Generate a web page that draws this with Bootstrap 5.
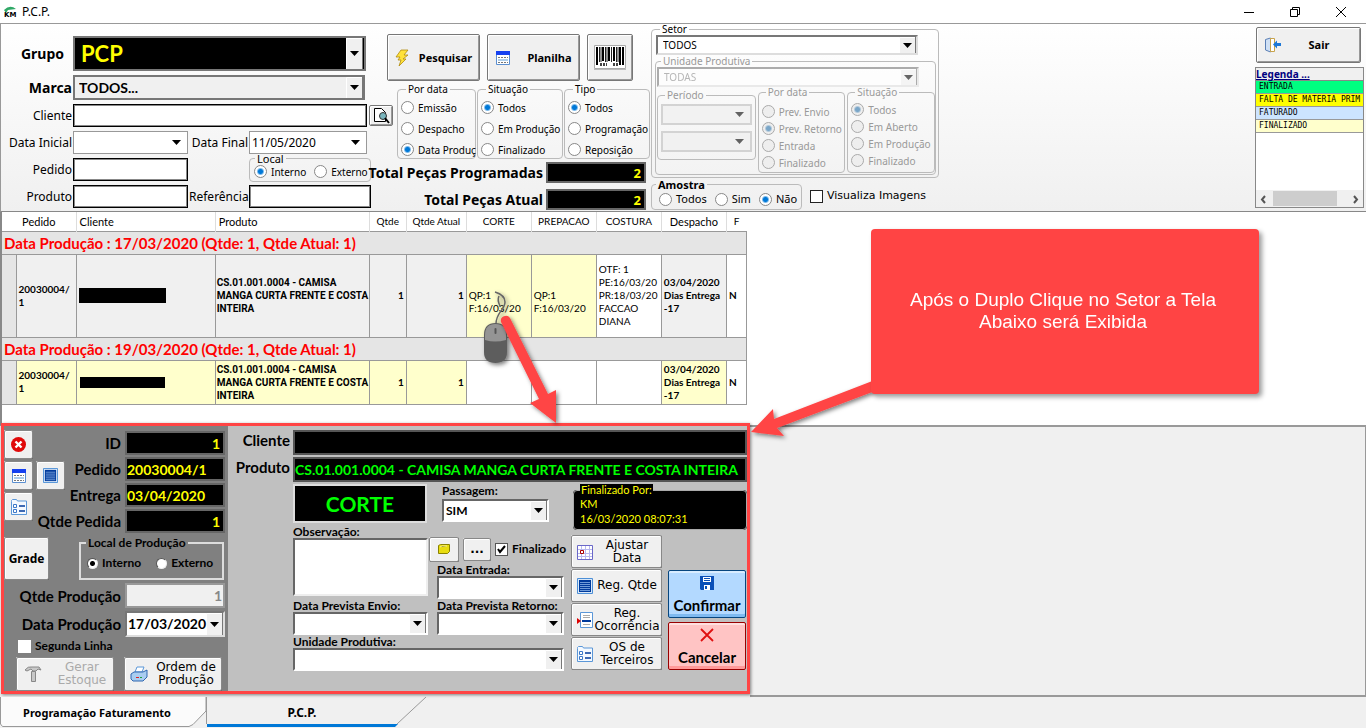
<!DOCTYPE html>
<html lang="pt-BR">
<head>
<meta charset="utf-8">
<meta name="viewport" content="width=device-width, initial-scale=1">
<title>P.C.P.</title>
<link href="https://cdn.jsdelivr.net/npm/bootstrap@5.3.0/dist/css/bootstrap.min.css" rel="stylesheet">
<style>
:root{--arrow:url("data:image/svg+xml,%3Csvg xmlns='http://www.w3.org/2000/svg' width='9' height='5'%3E%3Cpath d='M0 0h9L4.500 5z'/%3E%3C/svg%3E");
--arrowbtn:url("data:image/svg+xml,%3Csvg xmlns='http://www.w3.org/2000/svg' width='17' height='40'%3E%3Cpath fill='%23f0f0f0' d='M0 0h17v40H0z'/%3E%3Cpath fill='none' stroke='%23fff' d='M.5 40V.5H17'/%3E%3Cpath fill='none' stroke='%23777' d='M16.500 0v40'/%3E%3C/svg%3E")}
body{font-family:"Noto Sans",sans-serif;font-size:12px;line-height:14px;color:#000;background:#f0f0f0;min-height:100vh;overflow:hidden}

/* title bar */
.titlebar{background:#fff;height:23px}
.titlebar button{border:0;background:none;width:46px;height:22px;padding:0;line-height:1}
.winbtns{padding-right:2px}

/* shared controls */
fieldset{border:1px solid #bbb;border-radius:4px;min-width:0}
legend{float:none;width:auto;margin:0 0 0 5px;padding:0 2px;font-size:11px;line-height:12px}
input,select,textarea{border-radius:0;color:#000}
.fld{border:1px solid #000;box-shadow:inset 0 0 0 1px #888;background:#fff;height:23px;width:100%;padding:0 4px}
.dd{appearance:none;border:1px solid #999;background:var(--arrow) no-repeat right 6px center #fff;height:23px;width:100%;padding:0 22px 0 2px;opacity:1}
.dd3{appearance:none;border:2px solid;border-color:#777 #ddd #ddd #777;background:var(--arrow) no-repeat right 4px center,var(--arrowbtn) no-repeat right 0 top #fff;height:20px;width:100%;padding:0 20px 0 5px;opacity:1;color:#000}
.dd3:disabled{color:#888;background-color:#fff}
.rb{appearance:none;flex:none;width:13px;height:13px;border:1px solid #888;border-radius:50%;background:#fff;margin:0}
.rb:checked{background:radial-gradient(circle,#0078d7 0 2px,#fff 4px)}
.rb:disabled{border-color:#aaa;background:#eee}
.rb:checked:disabled{background:radial-gradient(circle,#7aa6c8 0 2px,#eee 4px)}
.rbt{appearance:none;flex:none;width:11px;height:11px;border-radius:50%;background:#fff;margin:0;border:1px solid #555;border-right-color:#eee;border-bottom-color:#eee}
.rbt:checked{background:radial-gradient(circle,#000 0 2px,#fff 3px)}
.ck{appearance:none;flex:none;width:13px;height:13px;border:1px solid #222;background:#fff;margin:0}
.ckt{appearance:none;width:13px;height:13px;flex:none;border:1px solid #555;background:#fff url("data:image/svg+xml,%3Csvg xmlns='http://www.w3.org/2000/svg' width='11' height='11'%3E%3Cpath fill='none' stroke='%23000' stroke-width='2' d='M2 5l2 3 5-6'/%3E%3C/svg%3E");margin:0}
.opt{display:flex;align-items:center;gap:4px;font-size:11px;white-space:nowrap;line-height:14px}
.wbtn{background:#f0f0f0;border:1px solid #777;border-radius:2px;box-shadow:inset 1px 1px #fff,inset -1px -1px #999;color:#000;display:flex;align-items:center;justify-content:center;padding:0;font-size:11px}
.wbtn svg,.bt svg{flex:none}
.black{background:#000;color:#ff0;border:2px solid #666;text-align:right;font-weight:700;padding:0 3px;width:100%;min-width:0}
.fw7{font-weight:700}

/* filters: left block */
.filters{border-top:1px solid #999;border-left:1px solid #999;border-bottom:1px solid #888;background:linear-gradient(#fff,#f0f0f0);height:189px}
.left-grid{display:grid;grid-template-columns:68px 115px 59px 1fr;grid-template-rows:35px 25px repeat(4,23px);gap:4px 1px;align-items:center;width:370px;flex:none;padding:12px 0 0 3px;align-content:start}
.left-grid>label{text-align:right;white-space:nowrap}
.left-grid>.fs14{font-size:14px}
.span3{grid-column:span 3}
.bigsel{appearance:none;background:var(--arrow) no-repeat right 5px center,var(--arrowbtn) no-repeat right 1px top 0 #000;border:2px solid #777;color:#ff0;font:700 22px/28px Lato,sans-serif;height:35px;width:293px;padding:0 6px}
.marca{height:25px;width:292px;background-color:#f0f0f0;font:700 14px Lato,sans-serif;border:2px solid #777;padding-left:4px}
.local{height:29px;padding:0;margin-top:-5px}
.left-grid fieldset .opt{font-size:10px}

/* filters: middle block */
.mid{width:279px;padding-top:10px;flex:none}
.mid>*{flex:none}
.btnrow{gap:7px;padding-left:16px;height:47px}
.btnrow .wide{width:93px}.btnrow .bar{width:46px}
.setrow{height:78px;gap:1px;margin-top:2px}
.setrow .find{width:24px;height:21px;margin:22px 3px 0 -2px;flex:none}
.setrow fieldset{padding:2px 0 0 3px;height:76px}
.setrow legend{font-size:10px}
.setrow .opt{height:21px;font-size:10px;gap:4px}
.fa{width:79px;flex:none}.fb{width:86px;flex:none}
.tot{display:grid;grid-template-columns:172px 100px;gap:3px;align-items:center;height:21px;margin-top:1px;margin-bottom:5px}
.tot label{justify-self:end;font-weight:700;font-size:14px;white-space:nowrap}
.tot input{height:21px;font-size:13px}

/* filters: sector block */
.setor{width:288px;margin-left:1px;flex:none}
.setor legend{font-size:10px;line-height:11px;margin-left:4px}
.outer{height:154px;padding:0 0 0 4px}
.outer>.dd3,.inner>.dd3{width:262px;font-size:10px}
.inner{padding:0 0 0 1px;margin:1px 2px 0 -1px;height:119px}
.inner legend,.inner .opt{color:#999}
.inner select{filter:opacity(.6)}
.trio{gap:2px;align-items:flex-start}
.per{width:99px;height:70px;margin-top:3px;padding:3px 3px}
.gray{background-color:#eee;height:21px;margin-bottom:6px;border:2px solid #bbb}
.pdt,.pst{width:88px;height:86px;padding:5px 0 0 3px}
.pst{padding-top:3px}
.trio .opt{height:17px;font-size:10px}
.amo{width:151px;height:31px;padding:2px 0 0 7px;margin-top:1px}
.setor .amo legend{font-size:11px;margin-left:-3px}
.vis{font-family:"DejaVu Sans",sans-serif;padding-top:4px}

/* filters: legend column */
.legcol{width:111px;padding:3px 2px 0 0;flex:none}
.sair{width:105px;height:36px;margin:0 0 4px 1px}
.legend-box{width:109px;border:1px solid #888;background:#fff;overflow:hidden;height:141px;display:flex;flex-direction:column}
.legend-box li{font:8px/12px "DejaVu Sans Mono",monospace;white-space:pre;padding-left:3px;border-bottom:1px solid #999}
.legt{background:#f0f0f0;border-bottom:1px solid #888;height:13px;font:700 10px/13px "Noto Sans",sans-serif}
.legt a{color:#000080}
.c1{background:#00ff80}.c2{background:#ff0}.c3{background:#cce4ff}.c4{background:#ffffcc}
.sbar{margin-top:auto;background:#f0f0f0;height:17px}
.sbar i{background:#cdcdcd;width:64px;height:15px;margin-right:10px}

/* order table */
.gridarea{background:#fff;border-left:2px solid #888;height:213px}
.tb{table-layout:fixed;width:745px;border-collapse:collapse;font:10px/13px Lato,sans-serif}
.tb th{font-weight:400;height:19px;border-right:1px solid #ddd;padding:0 3px;text-align:center;white-space:nowrap}
.tb th.big11{font-size:11px}
.tb td{border:1px solid #999;padding:0 2px;vertical-align:middle;font-weight:700}
.tb td.item{white-space:nowrap;padding:0 0 0 1px;font-family:Roboto,sans-serif}
.tb .grp td{height:23px;background:#e5e5e5;color:#f00;font:700 15px/20px Lato,sans-serif;border-left:0}
.tb td.ind{background:#e5e5e5;border-left:0;border-top-color:#e5e5e5}
.r1 td{background:#f0f0f0;height:83px}.r2 td{background:#ffffcc;height:44px}
.tb td.w{background:#fff}.tb td.y{background:#ffffcc}.tb td.n{font-weight:400}
.redact{background:#000;display:block}
.ra{width:87px;height:15px}.rc{width:85px;height:11px;margin-left:1px}

/* detail panel */
.lower{height:272px;border-top:1px solid #999}
.detail{width:749px;flex:none;border:3px solid #ff4444;margin:-3px 0 3px 1px;box-shadow:1px 1px 3px #0007;background:#c0c0c0;font-family:Lato,sans-serif;font-weight:700;position:relative}
.rest{border:1px solid #999;border-width:1px 1px 2px 0}
.bt{background:#f0f0f0;border:1px solid;border-color:#fff #555 #555 #fff;outline:1px solid #888;outline-offset:-1px;border-radius:2px;padding:0;color:#000;display:flex;align-items:center;justify-content:center;font:12px/13px "DejaVu Sans",sans-serif;box-shadow:inset 1px 1px #fff}
.ico{width:29px;height:29px;flex:none}
.side{background:#808080;width:224px;flex:none;padding:5px 3px 0 0}
.icol{margin-top:-1px;width:29px;gap:2px}
.info{display:grid;grid-template-columns:31px 61px 1fr;grid-template-rows:repeat(4,24px);gap:2px 0;flex:1}
.info label,.lbl15{font-size:15px;line-height:20px;text-align:right;padding-right:4px;white-space:nowrap}
.info label{align-self:center}
.info input{grid-column:3;font-size:14px}
.g1{grid-area:1/1/2/3}.g2{grid-area:2/1/3/3}.g3{grid-area:3/1/4/3}.g4{grid-area:4/1/5/3}
.gi{grid-area:2/1/4/2;margin-left:3px;margin-top:4px;z-index:1}
.lp{margin-top:4px}
.grade{width:45px;height:43px;font:700 12px "Noto Sans",sans-serif}
.lprod{width:145px;height:43px;border:2px solid #ddd;border-radius:0;padding:7px 0 0;margin-right:1px}
.lprod .opt,.lprod legend{font-size:12px}
.lprod .d-flex{gap:15px;padding-left:6px}
.pr{display:grid;grid-template-columns:1fr 100px;height:25px;margin-top:3px;align-items:center}
.pr+.pr{margin-top:3px}
.qdis{background:#f0f0f0;border:2px solid #999;text-align:right;color:#888;font-weight:700;font-size:14px;height:25px;width:100%;padding:0 1px}
.dpr{height:26px;font-size:14px;font-weight:700;padding:0 0 0 1px}
.seg{margin:3px 0 0 14px;font-size:12px}
.gb{margin:4px 0 0 12px;gap:10px}.gb .bt{height:34px;width:98px}
.gerar:disabled{color:#aaa}
.right{flex:1;padding:4px 0 0 4px}
.green{background:#000;color:#0f0;border:2px solid #555;font:700 14px Lato,sans-serif;height:25px;padding:0;width:100%}
.cp{display:grid;grid-template-columns:61px 1fr;gap:2px 0}
.cp .lbl15{padding-right:3px}
.body2{display:flex;margin:2px 0 0 61px;justify-content:space-between}
.abcol{width:273px}
.hl{font-size:12px;line-height:13px;display:block;white-space:nowrap}
.dd3.h23{height:23px;border-color:#666 #fff #fff #666;font-weight:700;font-size:12px}
.dd3.pas{padding-left:2px}
.corterow{gap:15px}
.corte{background:#000;color:#0f0;border:2px solid #ddd;width:134px;height:39px;font-size:21px;display:flex;align-items:center;justify-content:center}
.passlabel{padding-bottom:2px}.pas{width:107px}
.ab{display:grid;grid-template-columns:135px 127px;gap:0 9px;margin-top:2px}
textarea{width:100%;height:58px;border:2px solid;border-color:#666 #eee #eee #666;resize:none;display:block;padding:0 1px}
textarea:focus{outline:none}
.fin{height:38px;margin-left:-8px;padding-top:10px;gap:4px}
.yel{width:30px;height:25px;flex:none}.dots{width:28px;height:23px;flex:none;font-weight:700}
.finl{font-size:12px}
.both{grid-column:span 2}
.cdcol{width:174px}
.finpor{background:#000;color:#ff0;border-color:#aaa;font:11px/15px Lato,sans-serif;height:46px;padding:0 6px}
.finpor legend{margin:0;padding:0 1px;background:#000}
.cd{gap:6px;margin:5px 0 0 -2px}
.ccol{display:flex;flex-direction:column;gap:1px}
.ccol .bt{width:91px;height:33px}.ccol .bt span{flex:1}.ccol .bt svg{margin-left:5px}
.dcol{display:flex;flex-direction:column;gap:4px;padding-top:35px}
.big{width:78px;height:48px;border:1px solid #07467f;border-radius:2px;background:#b3d9ff;color:#000;font:700 15px/20px Lato,sans-serif;padding:5px 0 2px;display:flex;flex-direction:column;align-items:center;justify-content:space-between;box-shadow:inset 0 2px #d8ecff,inset 0 -3px #7fbaf0}
.no{background:#ffc4c4;border-color:#900;box-shadow:inset 0 2px #ffe0e0,inset 0 -3px #ff9a9a}

/* bottom tabs */
.tab1,.tab2{border:0;background:none;position:relative;height:31px;font-weight:700;font-size:12px;padding:0;color:#000}
.tab1{width:206px;padding-right:12px;font-size:11px}.tab2{width:220px;padding-right:28px}
.shape{position:absolute;inset:0;width:100%;height:100%}

/* annotations */
.lay{position:absolute;left:0;top:0;pointer-events:none}
.callout{position:absolute;left:871px;top:229px;width:388px;height:165px;background:#ff4444;border-radius:4px;color:#fff;font:19px/22px "Liberation Sans",sans-serif;box-shadow:3px 3px 5px #0006;display:flex;align-items:center;justify-content:center;text-align:center;padding:0 4px 2px 0}
</style>
</head>
<body class="d-flex flex-column position-relative">
<svg width="0" height="0" class="position-absolute">
<symbol id="i-cal" viewBox="0 0 16 16"><path fill="#fff" stroke="#5b8fd0" d="M1.500 1.500h13v13h-13z"/><path fill="#1540f0" d="M1 1h14v4H1z"/><path stroke="#777" stroke-dasharray="2 1" d="M3 7.500h10M3 12.500h10"/><path stroke="#5b9bd5" d="M3 10h10"/></symbol>
<symbol id="i-lines" viewBox="0 0 16 16"><path fill="#dbe9f9" stroke="#4d8fd6" d="M.5.5h15v15H.5z"/><path fill="#003a9b" d="M2 2h12v12H2z"/><path stroke="#6f9bd8" d="M3 4.500h10M3 6.500h10M3 8.500h10M3 10.500h10M3 12.500h10"/></symbol>
<symbol id="i-list" viewBox="0 0 16 16"><path fill="#f4f9ff" stroke="#5b97d8" d="M.5 2.500V1.500L1.500.5h4l1 1.500h9v13.500H.5z"/><path fill="#fff" stroke="#3c78c8" d="M2.500 5.500h3v3h-3zM2.500 10.500h3v3h-3z"/><path stroke="#003a9b" stroke-width="1.500" d="M8 7h6M8 12h6"/></symbol>
</svg>
<header class="titlebar d-flex align-items-center">
<svg width="18" height="12" class="ms-1"><path d="M0 4Q6-2 12 3L4 4 2 7z" fill="#2fa866"/><text x="0" y="11" font-size="7" font-weight="700" font-family="DejaVu Sans">KM</text></svg>
<span>P.C.P.</span>
<div class="ms-auto d-flex winbtns">
<button aria-label="Minimizar"><svg width="12" height="12"><path stroke="#000" d="M1 6.500h10"/></svg></button>
<button aria-label="Restaurar"><svg width="12" height="12"><path fill="none" stroke="#000" d="M1.500 3.500h7v7h-7zM3.500 3.500v-2h7v7h-2"/></svg></button>
<button aria-label="Fechar"><svg width="12" height="12"><path stroke="#000" d="M1 1l10 10M11 1L1 11"/></svg></button>
</div>
</header>

<section class="filters d-flex">
<div class="left-grid">
<label class="fw7 fs14 pe-2" for="grupo">Grupo</label><select id="grupo" class="bigsel span3"><option>PCP</option></select>
<label class="fw7 fs14" for="marca">Marca</label><select id="marca" class="dd3 marca span3"><option>TODOS...</option></select>
<label for="cli">Cliente</label><div class="span3 pe-1"><input id="cli" class="fld"></div>
<label for="di">Data Inicial</label><select id="di" class="dd"><option></option></select><label for="df">Data Final</label><div class="pe-1"><select id="df" class="dd"><option>11/05/2020</option></select></div>
<label for="ped">Pedido</label><input id="ped" class="fld"><span></span>
<fieldset class="local"><legend>Local</legend><div class="d-flex gap-2 ps-1"><label class="opt"><input class="rb" type="radio" name="loc" checked>Interno</label><label class="opt"><input class="rb" type="radio" name="loc">Externo</label></div></fieldset>
<label for="prod">Produto</label><input id="prod" class="fld"><label for="ref">Referência</label><input id="ref" class="fld">
</div>
<div class="mid d-flex flex-column">
<div class="d-flex btnrow">
<button class="wbtn fw7 wide"><svg width="16" height="18" class="me-2"><path fill="#ffe23a" stroke="#b08a10" stroke-width=".8" d="M6 1h7l-4 5h4L8 10h3L4 17l2-6H3l2-3H1z"/></svg>Pesquisar</button>
<button class="wbtn fw7 wide"><svg width="16" height="16" class="me-3"><use href="#i-cal"/></svg>Planilha</button>
<button class="wbtn bar" aria-label="Código de barras"><svg width="32" height="26"><path fill="#fff" stroke="#aaa" d="M.5.5h31v23H.5z"/><path stroke="#000" stroke-width="2" d="M3 2v18M9 2v14M15 2v14M20 2v14M26 2v18M29 2v18"/><path stroke="#222" d="M5.500 2v15M7 2v15M11.500 2v15M13 2v15M17.500 2v15M22.500 2v15M24 2v15"/><path d="M6 19.500h7M19 19.500h6" stroke="#444" stroke-width="3" stroke-dasharray="2 1"/><path stroke="#bbb" d="M0 24.500h32"/></svg></button>
</div>
<div class="d-flex setrow">
<button class="wbtn find" aria-label="Localizar"><svg width="17" height="17"><path fill="#fff" stroke="#000" d="M1.500 1.500h7l4 4v9h-11z"/><circle cx="10" cy="9" r="3.500" fill="#79b5bd" stroke="#333"/><path stroke="#000" stroke-width="2" d="M12 11l4 5"/></svg></button>
<fieldset class="fa"><legend>Por data</legend><label class="opt"><input class="rb" type="radio" name="pd">Emissão</label><label class="opt"><input class="rb" type="radio" name="pd">Despacho</label><label class="opt"><input class="rb" type="radio" name="pd" checked>Data Produç</label></fieldset>
<fieldset class="fb"><legend>Situação</legend><label class="opt"><input class="rb" type="radio" name="si" checked>Todos</label><label class="opt"><input class="rb" type="radio" name="si">Em Produção</label><label class="opt"><input class="rb" type="radio" name="si">Finalizado</label></fieldset>
<fieldset class="fb"><legend>Tipo</legend><label class="opt"><input class="rb" type="radio" name="ti" checked>Todos</label><label class="opt"><input class="rb" type="radio" name="ti">Programação</label><label class="opt"><input class="rb" type="radio" name="ti">Reposição</label></fieldset>
</div>
<div class="tot"><label for="tp">Total Peças Programadas</label><input id="tp" class="black" value="2"></div>
<div class="tot"><label for="ta">Total Peças Atual</label><input id="ta" class="black" value="2"></div>
</div>
<div class="setor d-flex flex-column">
<fieldset class="outer"><legend>Setor</legend><select class="dd3" aria-label="Setor"><option>TODOS</option></select>
<fieldset class="inner" disabled><legend>Unidade Produtiva</legend><select class="dd3" aria-label="Unidade"><option>TODAS</option></select>
<div class="d-flex trio">
<fieldset class="per"><legend>Período</legend><select class="dd gray" aria-label="De"><option></option></select><select class="dd gray" aria-label="Até"><option></option></select></fieldset>
<fieldset class="pdt"><legend>Por data</legend><label class="opt"><input class="rb" type="radio" name="p2">Prev. Envio</label><label class="opt"><input class="rb" type="radio" name="p2" checked>Prev. Retorno</label><label class="opt"><input class="rb" type="radio" name="p2">Entrada</label><label class="opt"><input class="rb" type="radio" name="p2">Finalizado</label></fieldset>
<fieldset class="pst"><legend>Situação</legend><label class="opt"><input class="rb" type="radio" name="s2" checked>Todos</label><label class="opt"><input class="rb" type="radio" name="s2">Em Aberto</label><label class="opt"><input class="rb" type="radio" name="s2">Em Produção</label><label class="opt"><input class="rb" type="radio" name="s2">Finalizado</label></fieldset>
</div></fieldset></fieldset>
<div class="d-flex align-items-center gap-2"><fieldset class="amo"><legend class="fw7">Amostra</legend><div class="d-flex gap-2"><label class="opt"><input class="rb" type="radio" name="am">Todos</label><label class="opt"><input class="rb" type="radio" name="am">Sim</label><label class="opt"><input class="rb" type="radio" name="am" checked>Não</label></div></fieldset>
<label class="opt vis"><input class="ck" type="checkbox">Visualiza Imagens</label></div>
</div>
<div class="ms-auto legcol">
<button class="wbtn fw7 sair"><svg width="17" height="16" class="me-4"><path fill="#cfe0f5" stroke="#5a7fb5" d="M1.500 2.500l5-1.500v14l-5-2z"/><path fill="#fff" stroke="#c9a34a" d="M6.500 1.500h4v13h-4z"/><path fill="#1c78d8" d="M9 7.500l4-4V6h4v3h-4v2.500z"/></svg><span class="pe-4 ps-1">Sair</span></button>
<div class="legend-box"><div class="legt"><a href="#">Legenda ...</a></div>
<ul class="list-unstyled m-0"><li class="c1">ENTRADA</li><li class="c2">FALTA DE MATERIA PRIM</li><li class="c3">FATURADO</li><li class="c4">FINALIZADO</li></ul>
<div class="sbar d-flex justify-content-between align-items-center"><svg width="15" height="14"><path fill="none" stroke="#555" stroke-width="2" d="M9 4L6 7.500 9 11"/></svg><i></i><svg width="15" height="14"><path fill="none" stroke="#555" stroke-width="2" d="M6 4l3 3.500L6 11"/></svg></div></div>
</div>
</section>

<main class="gridarea">
<table class="tb"><colgroup><col style="width:14px"><col style="width:60px"><col style="width:139px"><col style="width:154px"><col style="width:37px"><col style="width:60px"><col style="width:65px"><col style="width:65px"><col style="width:65px"><col style="width:65px"><col style="width:20px"></colgroup>
<thead><tr><th colspan="2" class="big11">Pedido</th><th class="text-start big11">Cliente</th><th class="text-start big11">Produto</th><th>Qtde</th><th>Qtde Atual</th><th>CORTE</th><th>PREPACAO</th><th>COSTURA</th><th class="big11">Despacho</th><th class="border-0">F</th></tr></thead>
<tbody>
<tr class="grp"><td colspan="11">Data Produção : 17/03/2020 (Qtde: 1, Qtde Atual: 1)</td></tr>
<tr class="r1"><td class="ind"></td><td>20030004/<br>1</td><td><span class="redact ra"></span></td><td class="item">CS.01.001.0004 - CAMISA<br>MANGA CURTA FRENTE E COSTA<br>INTEIRA</td><td class="text-end">1</td><td class="text-end">1</td><td class="y n"><br>QP:1<br>F:16/03/20</td><td class="y n"><br>QP:1<br>F:16/03/20</td><td class="w n">OTF: 1<br>PE:16/03/20<br>PR:18/03/20<br>FACCAO<br>DIANA</td><td>03/04/2020<br>Dias Entrega<br>-17</td><td class="w">N</td></tr>
<tr class="grp"><td colspan="11">Data Produção : 19/03/2020 (Qtde: 1, Qtde Atual: 1)</td></tr>
<tr class="r2"><td class="ind"></td><td>20030004/<br>1</td><td><span class="redact rc"></span></td><td class="item">CS.01.001.0004 - CAMISA<br>MANGA CURTA FRENTE E COSTA<br>INTEIRA</td><td class="text-end">1</td><td class="text-end">1</td><td class="w"></td><td class="w"></td><td class="w"></td><td>03/04/2020<br>Dias Entrega<br>-17</td><td class="w">N</td></tr>
</tbody></table>
</main>

<section class="lower d-flex">
<div class="detail d-flex">
<div class="side">
<div class="d-flex">
<div class="d-flex flex-column icol"><button class="bt ico" aria-label="Fechar registro"><svg width="15" height="15"><circle cx="7.500" cy="7.500" r="7.500" fill="#e00a0a"/><path stroke="#fff" stroke-width="2.400" d="M4.500 4.500l6 6M10.500 4.500l-6 6"/></svg></button><button class="bt ico" aria-label="Calendário"><svg width="16" height="16"><use href="#i-cal"/></svg></button><button class="bt ico" aria-label="Lista"><svg width="16" height="16"><use href="#i-list"/></svg></button></div>
<div class="info">
<label for="id" class="g1">ID</label><input id="id" class="black" value="1">
<button class="bt ico gi" aria-label="Detalhes"><svg width="15" height="15"><use href="#i-lines"/></svg></button>
<label for="pe2" class="g2">Pedido</label><input id="pe2" class="black text-start ps-0" value="20030004/1">
<label for="en" class="g3">Entrega</label><input id="en" class="black text-start ps-0" value="03/04/2020">
<label for="qp" class="g4">Qtde Pedida</label><input id="qp" class="black" value="1">
</div></div>
<div class="d-flex justify-content-between lp"><button class="bt grade">Grade</button>
<fieldset class="lprod"><legend>Local de Produção</legend><div class="d-flex"><label class="opt"><input class="rbt" type="radio" name="lp" checked>Interno</label><label class="opt"><input class="rbt" type="radio" name="lp">Externo</label></div></fieldset></div>
<div class="pr"><label class="lbl15" for="qpr">Qtde Produção</label><input id="qpr" class="qdis" value="1" disabled></div>
<div class="pr"><label class="lbl15" for="dpr">Data Produção</label><select id="dpr" class="dd3 dpr"><option>17/03/2020</option></select></div>
<label class="opt seg"><input class="ck border-0" type="checkbox">Segunda Linha</label>
<div class="d-flex gb"><button class="bt gerar" disabled><svg width="18" height="18" class="me-3"><path fill="#c8c8c8" stroke="#888" d="M1 5q3-4 7-3h7l2 3-3-1-2 2H9L7 4 3 6zM7.500 6.500h4v10h-4z"/></svg><span>Gerar<br>Estoque</span></button>
<button class="bt ordem"><svg width="18" height="16" class="me-2"><path fill="#fff" stroke="#5b97d8" d="M5 6l2-5h7l-2 5z"/><path fill="#a9cdf0" stroke="#2f66b0" d="M1 8l3-2h9l4-2v7l-4 4H3l-2-2z"/><path stroke="#e02020" d="M6 11.500h3"/><path stroke="#20a040" d="M10 11.500h2"/></svg><span>Ordem de<br>Produção</span></button></div>
</div>
<div class="right">
<div class="cp"><label class="lbl15" for="c2">Cliente</label><input id="c2" class="green"><label class="lbl15" for="p3">Produto</label><input id="p3" class="green" value="CS.01.001.0004 - CAMISA MANGA CURTA FRENTE E COSTA INTEIRA"></div>
<div class="body2">
<div class="abcol">
<div class="d-flex corterow"><div class="corte">CORTE</div><div><label class="hl passlabel" for="pas">Passagem:</label><select id="pas" class="dd3 h23 pas"><option>SIM</option></select></div></div>
<div class="ab">
<div><label class="hl" for="ob">Observação:</label><textarea id="ob" autofocus></textarea></div>
<div><div class="d-flex align-items-center fin"><button class="bt yel" aria-label="Nota"><svg width="14" height="12"><path fill="#e8dc10" stroke="#8a8200" d="M1.500 2.500l2-1h9v7l-2 2h-9z"/><path stroke="#fff89a" d="M3 4l2-1h5"/></svg></button><button class="bt dots">...</button><label class="opt finl"><input class="ckt" type="checkbox" checked>Finalizado</label></div>
<label class="hl" for="de">Data Entrada:</label><select id="de" class="dd3 h23"><option></option></select></div>
<div><label class="hl" for="dpe">Data Prevista Envio:</label><select id="dpe" class="dd3 h23"><option></option></select></div>
<div><label class="hl" for="dprt">Data Prevista Retorno:</label><select id="dprt" class="dd3 h23"><option></option></select></div>
<div class="both"><label class="hl" for="up">Unidade Produtiva:</label><select id="up" class="dd3 h23"><option></option></select></div>
</div></div>
<div class="cdcol">
<fieldset class="finpor"><legend>Finalizado Por:</legend>KM<br>16/03/2020 08:07:31</fieldset>
<div class="d-flex cd"><div class="ccol">
<button class="bt"><svg width="16" height="16"><path fill="#fff" stroke="#6a68c8" d="M.5 1.500h15v14H.5z"/><path stroke="#b9b8f0" d="M4.500 2v13M8.500 2v13M12.500 2v13M1 5.500h14M1 9.500h14M1 12.500h14"/><path fill="#fff" stroke="#a00" d="M3.500 6.500h3v3h-3z"/></svg><span>Ajustar<br>Data</span></button>
<button class="bt"><svg width="16" height="16"><use href="#i-lines"/></svg><span>Reg. Qtde</span></button>
<button class="bt"><svg width="16" height="16"><path fill="#fff" stroke="#5b97d8" d="M3.500.5h12v15h-12z"/><path stroke="#aaa" d="M6 3.500h7M6 5.500h7M6 12.500h7"/><path stroke="#003a9b" stroke-width="2" d="M5 9h9"/><path fill="#d00" d="M0 6l4 3-4 3z"/></svg><span>Reg.<br>Ocorrência</span></button>
<button class="bt"><svg width="16" height="16"><use href="#i-list"/></svg><span>OS de<br>Terceiros</span></button>
</div><div class="dcol">
<button class="big ok"><svg width="14" height="14"><path fill="#0a50b8" d="M0 0h14v14H1l-1-1z"/><path fill="#fff" d="M3 1h8v5H3zM4 9h6v5H4z"/><path stroke="#0a50b8" d="M4 2.500h6M4 4.500h6"/><path fill="#0a50b8" d="M5 10h2v3H5z"/></svg>Confirmar</button>
<button class="big no"><svg width="14" height="14"><path fill="none" stroke="#e01010" stroke-width="1.800" d="M1 1l12 12M13 1L1 13"/></svg>Cancelar</button>
</div></div></div>
</div></div>
</div>
<div class="flex-grow-1 rest"></div>
</section>
<nav class="d-flex">
<button class="tab1"><svg class="shape" viewBox="0 0 206 31" preserveAspectRatio="none"><path fill="#fbfbfb" stroke="#999" d="M.5 0v27l2 2.500H189l4-2 13-13.500V0"/></svg><span class="position-relative">Programação Faturamento</span></button>
<button class="tab2"><svg class="shape" viewBox="0 0 220 31" preserveAspectRatio="none"><path fill="none" stroke="#999" d="M.5 0v27M191 27L220 0"/><path fill="#0078d7" d="M1 27h191l-3 3H1z"/></svg><span class="position-relative">P.C.P.</span></button>
</nav>

<svg class="lay" width="1366" height="728"><defs><filter id="sh" x="-20%" y="-20%" width="150%" height="150%"><feDropShadow dx="2" dy="2" stdDeviation="2" flood-opacity=".5"/></filter></defs>
<g filter="url(#sh)"><path fill="none" stroke="#666" stroke-width="1.500" d="M495 292q10 3 10 10c0 8-9 10-9 22M500 306q-3-6-1-10"/><path fill="#5d5d5d" d="M484 335q0-12 11.500-12T507 335v17q0 11-11.500 11T484 352z"/><path fill="#949494" d="M485 340v-5q0-11 10.500-11T506 335v5q-11 3-21 0z"/><path stroke="#555" stroke-width="2" stroke-linecap="round" d="M495.500 329v4"/></g>
<g filter="url(#sh)" fill="#ff4444"><path d="M501 322a5 5 0 0 1 9-4l38 76 8-4v33l-26-20 9-4z"/></g>
<path filter="url(#sh)" fill="#ff4444" d="M875 380L774 419l-1-10-22 23 33 4-7-8 98-37z"/>
</svg>
<div class="callout"><div>Após o Duplo Clique no Setor a Tela<br>Abaixo será Exibida</div></div>
<script src="https://cdn.jsdelivr.net/npm/bootstrap@5.3.0/dist/js/bootstrap.bundle.min.js"></script>
</body>
</html>
